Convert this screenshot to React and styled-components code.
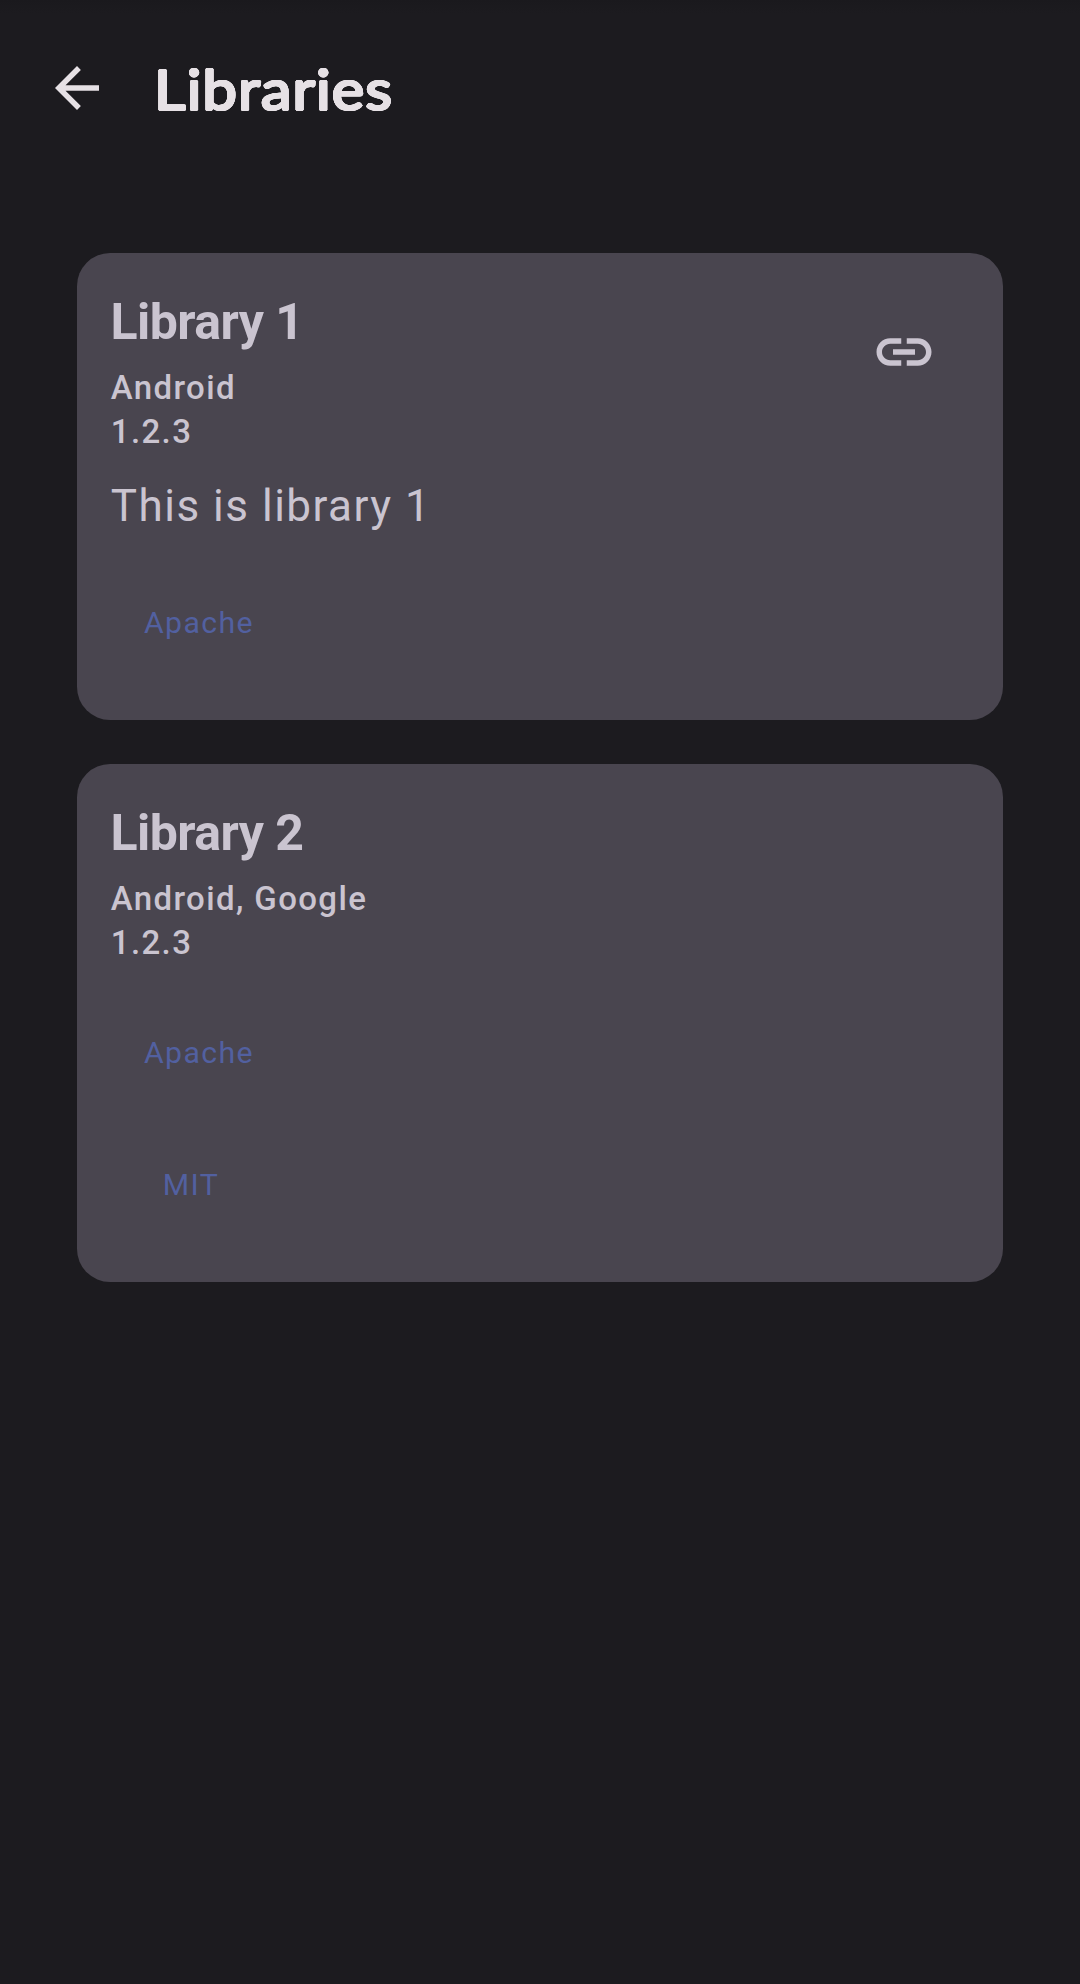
import React from "react";
import styled, { createGlobalStyle } from "styled-components";

const GlobalStyle = createGlobalStyle`
  * { box-sizing: border-box; }
  body { margin: 0; background: #1c1b1f; }
`;

const Screen = styled.div`
  min-height: 1984px;
  background: linear-gradient(#1a191d, #1c1b1f 14px);
  font-family: Roboto, sans-serif;
  color: #cac4d0;
`;

const TopBar = styled.header`
  display: flex;
  align-items: center;
  height: 176px;
  padding: 0 44px;
  gap: 44px;
  color: #e6e1e5;
`;

const BackButton = styled.button`
  display: flex;
  padding: 0;
  border: 0;
  background: none;
  color: inherit;
`;

// Shadows spread evenly around the glyphs thicken the strokes and round their ends.
const roundedWeight = Array.from({ length: 16 }, (_, i) => {
  const angle = (i * Math.PI) / 8;
  return `${(1.15 * Math.cos(angle)).toFixed(2)}px ${(1.1 * Math.sin(angle)).toFixed(2)}px 0 #e6e1e5`;
}).join(", ");

const Heading = styled.h1`
  margin: 0;
  font: 400 57px/80px Lato, sans-serif;
  letter-spacing: 0.95px;
  text-shadow: ${roundedWeight};
  transform: scaleX(1.08);
  transform-origin: left;
`;

const Icon = styled.svg`
  display: block;
  width: 66px;
  height: 66px;
  fill: currentColor;
`;

const List = styled.main`
  display: flex;
  flex-direction: column;
  gap: 44px;
  padding: 77px 77px 0;
`;

const Card = styled.article`
  padding: 33px;
  border-radius: 33px;
  background: #49454f;
`;

const CardHeader = styled.div`
  display: flex;
  justify-content: space-between;
`;

const Name = styled.h2`
  margin: 0 0 8px;
  padding-left: 0.6px;
  font-size: 50px;
  font-weight: 700;
  line-height: 72px;
  letter-spacing: -0.55px;
`;

const Meta = styled.p`
  margin: 0;
  padding-left: 0.8px;
  font-size: 33px;
  font-weight: 500;
  line-height: 44px;
  letter-spacing: 1.375px;
`;

const LinkButton = styled.a`
  display: flex;
  align-items: center;
  justify-content: center;
  width: 132px;
  height: 132px;
`;

const Description = styled.p`
  margin: 19px 0 -4px;
  padding-left: 0.8px;
  font-size: 44px;
  line-height: 66px;
  letter-spacing: 1.5px;
`;

const Licenses = styled.div`
  display: flex;
  flex-direction: column;
  align-items: flex-start;
  padding-top: 20px;
`;

const License = styled.button`
  min-width: 161px;
  height: 132px;
  padding: 4px 33px 0 34px;
  border: 0;
  background: none;
  color: #5260a0;
  font: 400 30.25px/44px Roboto, sans-serif;
  letter-spacing: 1.375px;
`;

const libraries = [
  {
    name: "Library 1",
    authors: "Android",
    version: "1.2.3",
    description: "This is library 1",
    licenses: ["Apache"],
    link: true,
  },
  {
    name: "Library 2",
    authors: "Android, Google",
    version: "1.2.3",
    licenses: ["Apache", "MIT"],
  },
];

export default function App() {
  return (
    <Screen>
      <GlobalStyle />
      <TopBar>
        <BackButton aria-label="Back">
          <Icon viewBox="0 0 24 24">
            <path d="M20 11H7.83l5.59-5.59L12 4l-8 8 8 8 1.41-1.41L7.83 13H20v-2z" />
          </Icon>
        </BackButton>
        <Heading>Libraries</Heading>
      </TopBar>
      <List>
        {libraries.map((lib) => (
          <Card key={lib.name}>
            <CardHeader>
              <div>
                <Name>{lib.name}</Name>
                <Meta>{lib.authors}</Meta>
                <Meta>{lib.version}</Meta>
              </div>
              {lib.link && (
                <LinkButton aria-label="Website">
                  <Icon viewBox="0 0 24 24">
                    <path d="M17 7h-4v2h4c1.65 0 3 1.35 3 3s-1.35 3-3 3h-4v2h4c2.76 0 5-2.24 5-5s-2.24-5-5-5zm-6 8H7c-1.65 0-3-1.35-3-3s1.35-3 3-3h4V7H7c-2.76 0-5 2.24-5 5s2.24 5 5 5h4v-2zm-3-4h8v2H8z" />
                  </Icon>
                </LinkButton>
              )}
            </CardHeader>
            {lib.description && <Description>{lib.description}</Description>}
            <Licenses>
              {lib.licenses.map((license) => (
                <License key={license}>{license}</License>
              ))}
            </Licenses>
          </Card>
        ))}
      </List>
    </Screen>
  );
}
